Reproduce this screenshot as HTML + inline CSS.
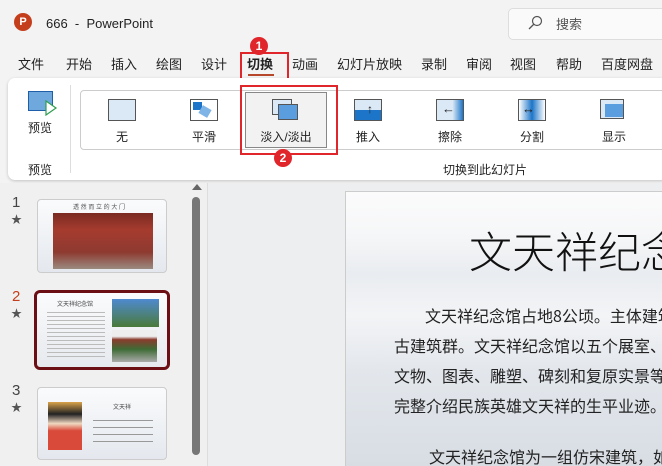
<!DOCTYPE html>
<html><head><meta charset="utf-8"><style>
*{margin:0;padding:0;box-sizing:border-box}
html,body{width:662px;height:466px;overflow:hidden}
body{background:#f3f3f3;font-family:"Liberation Sans","Noto Sans CJK SC",sans-serif;color:#222;position:relative}
.a{position:absolute}
.tab{position:absolute;top:54px;font-size:13px;white-space:nowrap}
.it{position:absolute;top:128px;font-size:12px;width:60px;text-align:center}
.ic{position:absolute;top:99px;width:28px;height:22px;border:1px solid #555;background:#dbe8f5}
.circ{position:absolute;width:18px;height:18px;border-radius:50%;background:#e0262b;color:#fff;font-size:12px;font-weight:bold;text-align:center;line-height:18px}
.body{position:absolute;font-size:16px;color:#222;white-space:nowrap;font-family:"Noto Sans CJK SC",sans-serif}
.clip{position:absolute;left:0;top:0;width:662px;height:466px;overflow:hidden}
</style></head><body><div class="clip">
<!-- title bar -->
<div class="a" style="left:14px;top:13px;width:18px;height:18px;border-radius:50%;background:#c43e1c;color:#fff;font-size:11px;font-weight:bold;text-align:center;line-height:18px">P</div>
<div class="a" style="left:46px;top:16px;font-size:13px">666&nbsp; - &nbsp;PowerPoint</div>
<div class="a" style="left:508px;top:8px;width:154px;height:32px;background:#fafafa;border:1px solid #ddd;border-right:none;border-radius:5px 0 0 5px"></div>
<svg class="a" style="left:527px;top:15px" width="16" height="16"><circle cx="10" cy="6" r="4.5" fill="none" stroke="#555" stroke-width="1.2"/><line x1="7" y1="9" x2="2" y2="14" stroke="#555" stroke-width="1.3"/></svg>
<div class="a" style="left:556px;top:14px;font-size:13px;color:#555">搜索</div>
<!-- tabs -->
<div class="tab" style="left:18px">文件</div><div class="tab" style="left:66px">开始</div><div class="tab" style="left:111px">插入</div><div class="tab" style="left:156px">绘图</div><div class="tab" style="left:201px">设计</div>
<div class="tab" style="left:247px;font-weight:bold">切换</div>
<div class="a" style="left:248px;top:74px;width:26px;height:2px;background:#b7472a"></div>
<div class="tab" style="left:292px">动画</div><div class="tab" style="left:337px">幻灯片放映</div><div class="tab" style="left:421px">录制</div><div class="tab" style="left:466px">审阅</div><div class="tab" style="left:510px">视图</div><div class="tab" style="left:556px">帮助</div><div class="tab" style="left:601px">百度网盘</div>
<div class="a" style="left:240px;top:52px;width:49px;height:28px;border:2px solid #e0262b"></div>
<div class="circ" style="left:250px;top:37px">1</div>
<!-- ribbon -->
<div class="a" style="left:8px;top:78px;width:660px;height:102px;background:#fff;border-radius:7px;box-shadow:0 1px 3px rgba(0,0,0,.2)"></div>
<div class="a" style="left:28px;top:91px;width:25px;height:20px;border:1.5px solid #1e5fa8;background:#6fa8dc"></div>
<svg class="a" style="left:44px;top:100px" width="14" height="16"><path d="M2 1 L12 8 L2 15 Z" fill="#fff" stroke="#2e9e4f" stroke-width="1.2"/></svg>
<div class="a" style="left:28px;top:119px;font-size:12px">预览</div>
<div class="a" style="left:28px;top:161px;font-size:12px">预览</div>
<div class="a" style="left:70px;top:85px;width:1px;height:88px;background:#ddd"></div>
<div class="a" style="left:80px;top:90px;width:590px;height:60px;border:1px solid #ccc;border-radius:4px"></div>
<div class="a" style="left:245px;top:92px;width:82px;height:56px;background:#f2f2f2;border:1px solid #888"></div>
<div class="a" style="left:240px;top:85px;width:98px;height:70px;border:2px solid #e0262b"></div>
<div class="circ" style="left:274px;top:149px">2</div>
<div class="ic" style="left:108px"></div>
<div class="ic" style="left:190px;background:#fff"><div class="a" style="left:2px;top:2px;width:9px;height:8px;background:#1c75c8"></div><div class="a" style="left:9px;top:7px;width:10px;height:9px;background:#7fb4e6;transform:rotate(30deg)"></div></div>
<div class="ic" style="left:272px;background:transparent;border:none"><div class="a" style="left:0;top:0;width:20px;height:16px;border:1px solid #555;background:#dbe8f5"></div><div class="a" style="left:6px;top:5px;width:20px;height:16px;border:1px solid #555;background:#5a9ee0"></div></div>
<div class="ic" style="left:354px;background:linear-gradient(#dbe8f5 50%,#1c75c8 50%)"><div class="a" style="left:12px;top:3px;color:#222;font-size:12px;line-height:12px">↑</div></div>
<div class="ic" style="left:436px;background:linear-gradient(90deg,#dbe8f5 60%,#1c75c8)"><div class="a" style="left:5px;top:2px;font-size:13px;line-height:14px">←</div></div>
<div class="ic" style="left:518px;background:linear-gradient(90deg,#fff,#1c75c8 50%,#fff)"><div class="a" style="left:3px;top:2px;font-size:13px;line-height:14px">↔</div></div>
<div class="ic" style="left:600px;background:transparent;border:none"><div class="a" style="left:0;top:0;width:24px;height:20px;border:1px solid #555;background:#dbe8f5"></div><div class="a" style="left:5px;top:5px;width:18px;height:13px;background:#5a9ee0"></div></div>
<div class="it" style="left:92px">无</div><div class="it" style="left:174px">平滑</div><div class="it" style="left:256px">淡入/淡出</div><div class="it" style="left:338px">推入</div><div class="it" style="left:420px">擦除</div><div class="it" style="left:502px">分割</div><div class="it" style="left:584px">显示</div>
<div class="a" style="left:443px;top:161px;font-size:12px">切换到此幻灯片</div>
<!-- left pane -->
<div class="a" style="left:0;top:183px;width:207px;height:283px;background:#f0f0f0"></div>
<div class="a" style="left:12px;top:194px;font-size:15px;color:#444">1</div><div class="a" style="left:11px;top:211px;font-size:11px;color:#555">★</div>
<div class="a" style="left:12px;top:288px;font-size:15px;color:#c43e1c">2</div><div class="a" style="left:11px;top:305px;font-size:11px;color:#555">★</div>
<div class="a" style="left:12px;top:382px;font-size:15px;color:#444">3</div><div class="a" style="left:11px;top:399px;font-size:11px;color:#555">★</div>
<div class="a" style="left:37px;top:199px;width:130px;height:74px;background:linear-gradient(#fafbfc,#e4e8ee);border:1px solid #ccc;border-radius:4px"><div class="a" style="left:15px;top:13px;width:100px;height:56px;background:linear-gradient(#7a2a22 0,#a63b2f 30%,#8e3a30 70%,#9a8a80 100%)"></div><div class="a" style="left:35px;top:2px;font-size:6px;color:#555">透 然 而 立 的 大 门</div></div>
<div class="a" style="left:34px;top:290px;width:136px;height:80px;background:linear-gradient(#fafbfc,#e6e9ee);border:3px solid #6b0f14;border-radius:6px"><div class="a" style="left:75px;top:6px;width:47px;height:28px;background:linear-gradient(#4e8ad0,#4a7a3a)"></div><div class="a" style="left:75px;top:37px;width:45px;height:32px;background:linear-gradient(#eee 20%,#8a3b2c 30%,#3e6b35 60%,#aaa)"></div><div class="a" style="left:20px;top:6px;font-size:6px;color:#444">文天祥纪念馆</div><div class="a" style="left:10px;top:16px;width:58px;height:48px;background:repeating-linear-gradient(#fff0 0,#fff0 3px,#bbb 3px,#bbb 4px)"></div></div>
<div class="a" style="left:37px;top:387px;width:130px;height:73px;background:linear-gradient(#fafbfc,#e4e8ee);border:1px solid #ccc;border-radius:4px"><div class="a" style="left:10px;top:14px;width:34px;height:48px;background:linear-gradient(#d9a24a 0,#222 25%,#f0d8c0 45%,#d94a3a 60%)"></div><div class="a" style="left:75px;top:14px;font-size:6px;color:#444">文天祥</div><div class="a" style="left:55px;top:26px;width:60px;height:28px;background:repeating-linear-gradient(#fff0 0,#fff0 6px,#999 6px,#999 7px)"></div></div>
<div class="a" style="left:192px;top:184px;width:0;height:0;border-left:5px solid transparent;border-right:5px solid transparent;border-bottom:6px solid #666"></div>
<div class="a" style="left:192px;top:197px;width:8px;height:258px;background:#777;border-radius:4px"></div>
<div class="a" style="left:207px;top:183px;width:1px;height:283px;background:#ddd"></div>
<!-- main -->
<div class="a" style="left:208px;top:183px;width:454px;height:283px;background:#eceef0"></div>
<div class="a" style="left:345px;top:191px;width:317px;height:275px;border:1px solid #ccc;border-right:none;border-bottom:none;background:linear-gradient(180deg,#fbfbfc 0,#f6f7f8 15%,#e9ecf0 30%,#f3f4f6 45%,#e3e7ec 65%,#d8dde4 100%);overflow:hidden">
<div class="a" style="left:123px;top:30px;font-size:43px;color:#111;white-space:nowrap;font-family:'Noto Sans CJK SC',sans-serif;line-height:56px;font-weight:300">文天祥纪念馆</div>
<div class="body" style="left:79px;top:111px">文天祥纪念馆占地8公顷。主体建筑</div>
<div class="body" style="left:48px;top:141px">古建筑群。文天祥纪念馆以五个展室、</div>
<div class="body" style="left:48px;top:171px">文物、图表、雕塑、碑刻和复原实景等</div>
<div class="body" style="left:48px;top:201px">完整介绍民族英雄文天祥的生平业迹。</div>
<div class="body" style="left:83px;top:252px">文天祥纪念馆为一组仿宋建筑，如</div>
</div>
</div></body></html>
